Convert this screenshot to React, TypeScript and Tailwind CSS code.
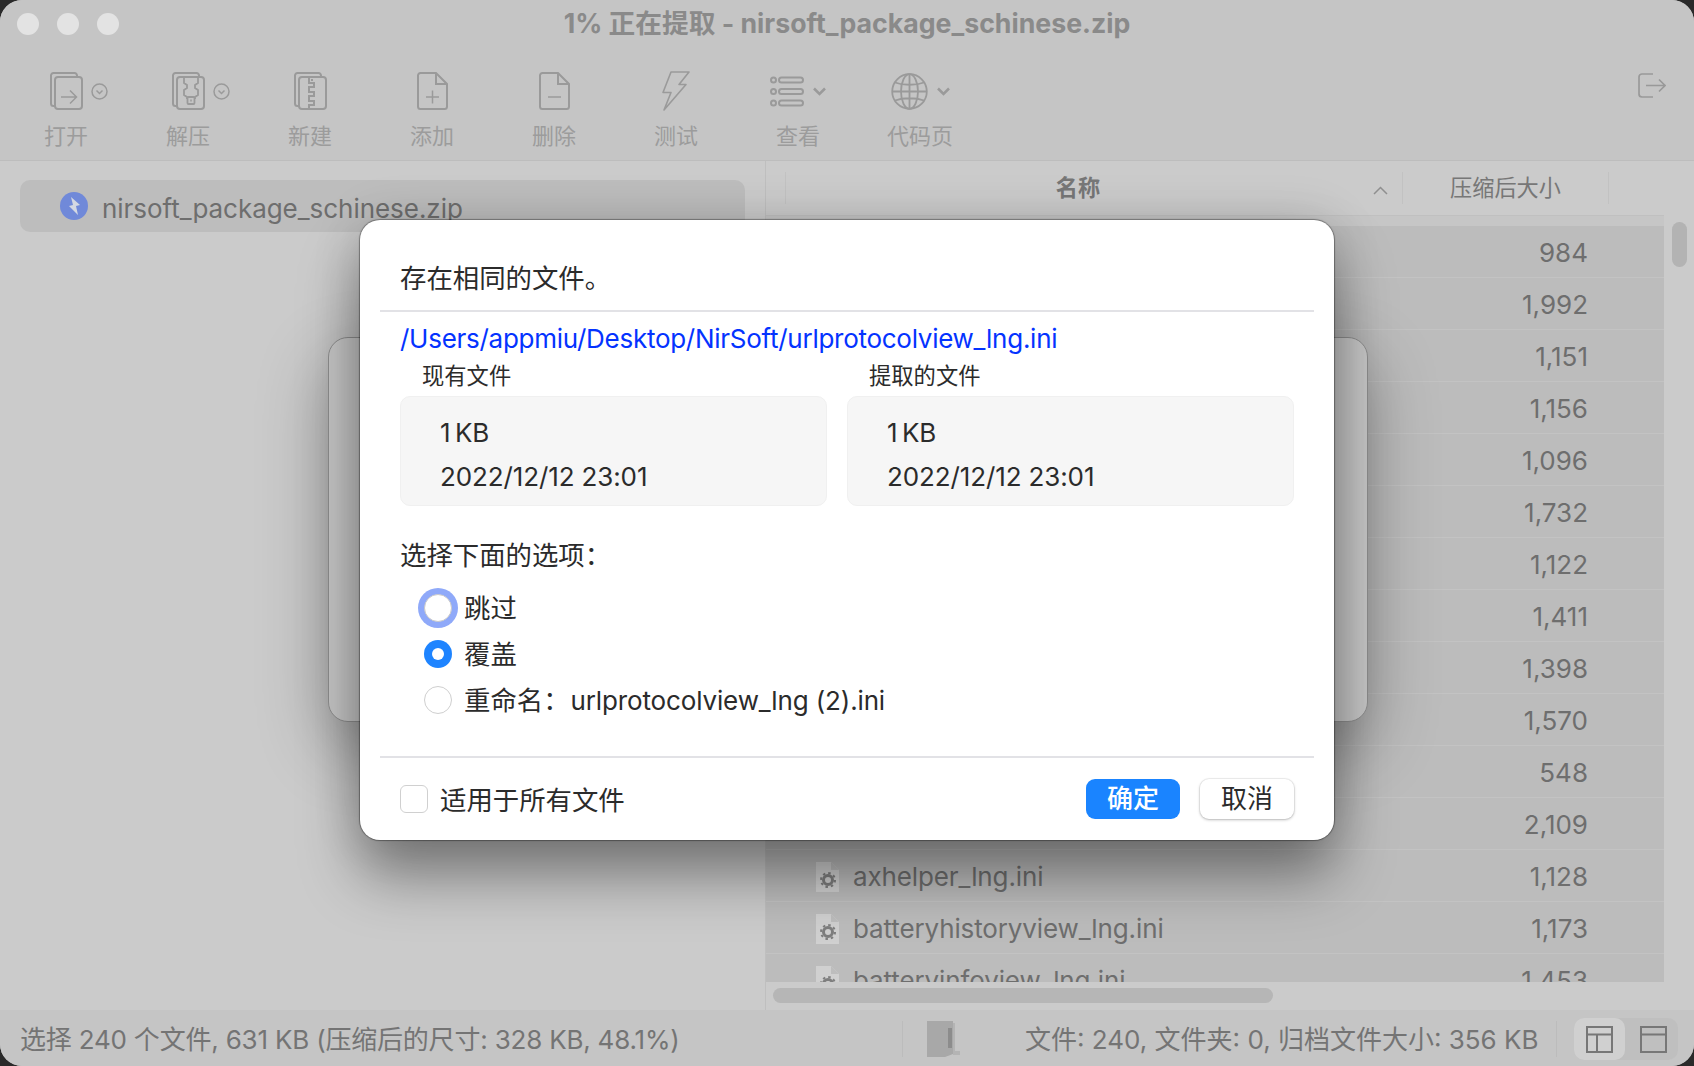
import React from "react";

const G = "#9a9a9a";

function Frames({ children }: { children?: React.ReactNode }) {
  return (
    <svg width="33" height="38" viewBox="0 0 33 38" fill="none" stroke={G} strokeWidth="2">
      <path d="M5 34H3.500a2.500 2.500 0 0 1-2.500-2.500V3.500A2.500 2.500 0 0 1 3.500 1h21A2.500 2.500 0 0 1 27 3.500V5" />
      <rect x="5" y="5" width="27" height="32" rx="3" />
      {children}
    </svg>
  );
}
const OpenIcon = () => (
  <Frames>
    <path d="M11 25h15M20 18.500l6.500 6.500-6.500 6.500" strokeWidth="1.500" />
  </Frames>
);
const ExtractIcon = () => (
  <Frames>
    <path d="M12 5v6l3 2v3l-3 2v5l3 2v2M26 5v6l-3 2v3l3 2v5l-3 2v2" strokeWidth="1.800" />
    <rect x="15.500" y="25" width="7" height="7" rx="1" strokeWidth="1.800" />
    <path d="M19 27.500v2" strokeWidth="1.500" />
  </Frames>
);
const NewZipIcon = () => (
  <Frames>
    <path d="M15 5v6h5v4h-5v5h5v4h-5v5h5v4h-5v4" strokeWidth="2" />
    <path d="M17 8h2" strokeWidth="2" />
  </Frames>
);
const DocIcon = ({ plus }: { plus?: boolean }) => (
  <svg width="31" height="38" viewBox="0 0 31 38" fill="none" stroke={G} strokeWidth="2">
    <path d="M3.500 1H19l11 11v22.500a2.500 2.500 0 0 1-2.500 2.500h-24A2.500 2.500 0 0 1 1 34.500v-31A2.500 2.500 0 0 1 3.500 1z" />
    <path d="M19 1v11h11" />
    <path d="M9 25h13" strokeWidth="1.500" />
    {plus && <path d="M15.500 18.500v13" strokeWidth="1.500" />}
  </svg>
);
const BoltIcon = () => (
  <svg width="28" height="40" viewBox="0 0 28 40" fill="none" stroke={G} strokeWidth="1.600" strokeLinejoin="round">
    <path d="M9 1h18L17 13.500h7L2 39l7-17.500H1z" />
  </svg>
);
const ListIcon = () => (
  <svg width="34" height="31" viewBox="0 0 34 31" fill="none" stroke={G} strokeWidth="2">
    <circle cx="3.500" cy="4" r="2.500" />
    <circle cx="3.500" cy="15.500" r="2.500" />
    <circle cx="3.500" cy="27" r="2.500" />
    <rect x="9" y="1.500" width="24" height="5" rx="2.500" />
    <rect x="9" y="13" width="24" height="5" rx="2.500" />
    <rect x="9" y="24.500" width="24" height="5" rx="2.500" />
  </svg>
);
const GlobeIcon = () => (
  <svg width="37" height="37" viewBox="0 0 37 37" fill="none" stroke={G} strokeWidth="1.800">
    <circle cx="18.500" cy="18.500" r="17.300" />
    <ellipse cx="18.500" cy="18.500" rx="8.500" ry="17.300" />
    <path d="M18.500 1v35M1.200 18.500h34.600M4 9.500c8 3 21 3 29 0M4 27.500c8-3 21-3 29 0" />
  </svg>
);
const CircleChevron = () => (
  <svg width="17" height="17" viewBox="0 0 17 17" fill="none" stroke={G} strokeWidth="1.500">
    <circle cx="8.500" cy="8.500" r="7.500" />
    <path d="M5.500 7.500l3 3 3-3" />
  </svg>
);
const Chevron = () => (
  <svg width="13" height="9" viewBox="0 0 13 9" fill="none" stroke={G} strokeWidth="2.500">
    <path d="M1 1.500l5.500 5.500L12 1.500" />
  </svg>
);
const ExitIcon = () => (
  <svg width="28" height="25" viewBox="0 0 28 25" fill="none" stroke="#999" strokeWidth="1.700">
    <path d="M15 1H4a3 3 0 0 0-3 3v17a3 3 0 0 0 3 3h11" />
    <path d="M8 12.500h19M21 6.500l6 6-6 6" />
  </svg>
);
const FileGear = () => (
  <svg width="24" height="32" viewBox="0 0 24 32" className="shrink-0">
    <path d="M0 1h15l8 8v22H0z" fill="#d0d0d0" />
    <path d="M15 1v8h8z" fill="#bdbdbd" />
    <circle cx="12" cy="19" r="4.500" fill="none" stroke="#7e7e7e" strokeWidth="3" />
    <circle cx="12" cy="19" r="7" fill="none" stroke="#7e7e7e" strokeWidth="2" strokeDasharray="2.500 3" />
  </svg>
);

function Tool({ label, icon, after, shift }: { label: string; icon: React.ReactNode; after?: React.ReactNode; shift?: boolean }) {
  return (
    <div className="flex w-[122px] shrink-0 flex-col items-center">
      <div className={shift ? "flex h-[40px] w-full items-center gap-[8px] pl-[45px]" : "flex h-[40px] items-center gap-[9px]"}>
        {icon}
        {after}
      </div>
      <div className="mt-[13px] text-[22px] leading-[24px] text-[#9c9c9c]">{label}</div>
    </div>
  );
}

const rows: { size: string; name?: string }[] = [
  { size: "984" }, { size: "1,992" }, { size: "1,151" }, { size: "1,156" }, { size: "1,096" },
  { size: "1,732" }, { size: "1,122" }, { size: "1,411" }, { size: "1,398" }, { size: "1,570" },
  { size: "548" }, { size: "2,109" },
  { size: "1,128", name: "axhelper_lng.ini" },
  { size: "1,173", name: "batteryhistoryview_lng.ini" },
  { size: "1,453", name: "batteryinfoview_lng.ini" },
];

function Radio({ state }: { state: "focus" | "on" | "off" }) {
  if (state === "on")
    return (
      <span className="flex h-[28px] w-[28px] items-center justify-center rounded-full bg-[#1e84ff]">
        <span className="h-[12px] w-[12px] rounded-full bg-white" />
      </span>
    );
  if (state === "focus")
    return <span className="h-[28px] w-[28px] rounded-full border border-[#c9c9c9] bg-white shadow-[0_0_0_6px_#8fa9f9]" />;
  return <span className="h-[28px] w-[28px] rounded-full border border-[#cfcfcf] bg-white" />;
}

function Option({ state, children }: { state: "focus" | "on" | "off"; children: React.ReactNode }) {
  return (
    <div className="flex h-[46px] items-center">
      <div className="flex w-[64px] justify-end pr-[12px]"><Radio state={state} /></div>
      <span className="pt-[2px] text-[26.400px]">{children}</span>
    </div>
  );
}

function InfoBox({ title, titlePad, cls }: { title: string; titlePad: string; cls: string }) {
  return (
    <div className={cls}>
      <div className={`text-[22.300px] leading-[26px] ${titlePad}`}>{title}</div>
      <div className="mt-[7px] flex h-[110px] flex-col rounded-[10px] border border-[#f0f0f0] bg-[#f6f6f6] pl-[39px] pt-[14px]">
        <div className="leading-[44px] [word-spacing:-3px]">1 KB</div>
        <div className="leading-[44px] tracking-[-0.12px]">2022/12/12 23:01</div>
      </div>
    </div>
  );
}

export default function App() {
  return (
    <div className="relative h-[1066px] w-[1694px] overflow-hidden bg-[#2a2a2a] font-[Inter,'Noto_Sans_CJK_SC',sans-serif] text-[26px] text-[#6e6e6e]">
      <div className="flex h-full flex-col overflow-hidden rounded-[22px] bg-[#cbcbcb]">
        {/* title + toolbar */}
        <div className="h-[161px] shrink-0 border-b border-[#bdbdbd] bg-[#c5c5c5]">
          <div className="grid h-[48px] grid-cols-[1fr_auto_1fr] items-center">
            <div className="flex gap-[18px] pl-[17px]">
              <span className="h-[22px] w-[22px] rounded-full bg-[#e3e3e3]" />
              <span className="h-[22px] w-[22px] rounded-full bg-[#e3e3e3]" />
              <span className="h-[22px] w-[22px] rounded-full bg-[#e3e3e3]" />
            </div>
            <div className="mb-[2px] text-[26.700px] font-bold text-[#8a8a8a]">1% 正在提取 - nirsoft_package_schinese.zip</div>
            <div />
          </div>
          <div className="flex items-start pl-[5px] pr-[28px] pt-[23px]">
            <Tool label="打开" icon={<OpenIcon />} after={<CircleChevron />} shift />
            <Tool label="解压" icon={<ExtractIcon />} after={<CircleChevron />} shift />
            <Tool label="新建" icon={<NewZipIcon />} />
            <Tool label="添加" icon={<DocIcon plus />} />
            <Tool label="删除" icon={<DocIcon />} />
            <Tool label="测试" icon={<BoltIcon />} />
            <Tool label="查看" icon={<ListIcon />} after={<Chevron />} />
            <Tool label="代码页" icon={<GlobeIcon />} after={<Chevron />} />
            <div className="ml-auto mt-[2px]"><ExitIcon /></div>
          </div>
        </div>

        {/* body */}
        <div className="flex h-[849px] shrink-0">
          <div className="w-[766px] shrink-0 border-r border-[#bfbfbf] px-[20px] pt-[19px]">
            <div className="flex h-[52px] w-[725px] items-center rounded-[10px] bg-[#bdbdbd] pl-[40px]">
              <svg width="28" height="28" viewBox="0 0 28 28" className="shrink-0">
                <circle cx="14" cy="14" r="14" fill="#7089d9" />
                <path d="M11 5l9 8-4 1 2 9-9-9 4-1z" fill="#d4d8e2" />
              </svg>
              <span className="ml-[14px] pt-[4px] tracking-[-0.04px] text-[#6e6e6e]">nirsoft_package_schinese.zip</span>
            </div>
          </div>
          <div className="flex min-w-0 flex-1 flex-col">
            <div className="flex h-[54px] shrink-0 items-center text-[22.200px] text-[#777]">
              <div className="ml-[19px] h-[32px] w-px bg-[#c2c2c2]" />
              <div className="relative flex h-full w-[616px] items-center justify-center pr-[32px] font-semibold">
                名称
                <svg width="15" height="9" viewBox="0 0 15 9" fill="none" stroke="#8f8f8f" strokeWidth="1.500" className="absolute right-[14px] top-[25px]">
                  <path d="M1 8l6.500-6.500L14 8" />
                </svg>
              </div>
              <div className="h-[32px] w-px bg-[#c2c2c2]" />
              <div className="flex w-[205px] justify-center">压缩后大小</div>
              <div className="h-[32px] w-px bg-[#c2c2c2]" />
            </div>
            <div className="flex min-h-0 flex-1">
              <div className="flex h-[767px] w-[898px] flex-col overflow-hidden">
                <div className="h-[11px] shrink-0 border-t border-[#c0c0c0] bg-[#c6c6c6]" />
                {rows.map((r) => (
                  <div key={r.size} className="flex h-[52px] shrink-0 items-center border-b border-[#c3c3c3] bg-[#bcbcbc] pl-[50px] pr-[76px] pt-[2px]">
                    {r.name && <FileGear />}
                    {r.name && <span className="ml-[13px] tracking-[-0.12px]">{r.name}</span>}
                    <span className="ml-auto">{r.size}</span>
                  </div>
                ))}
              </div>
              <div className="flex-1 pl-[8px] pt-[7px]">
                <div className="h-[45px] w-[15px] rounded-full bg-[#b3b3b3]" />
              </div>
            </div>
            <div className="h-[28px] shrink-0 pl-[7px] pt-[6px]">
              <div className="h-[15px] w-[500px] rounded-full bg-[#b6b6b6]" />
            </div>
          </div>
        </div>

        {/* status */}
        <div className="flex h-[56px] shrink-0 items-center bg-[#c5c5c5] pt-[2px] text-[26px] text-[#747474]">
          <span className="ml-[20px] w-[882px] shrink-0 tracking-[-0.2px]">选择 240 个文件, 631 KB (压缩后的尺寸: 328 KB, 48.1%)</span>
          <div className="h-[36px] w-px bg-[#bcbcbc]" />
          <svg width="35" height="38" viewBox="0 0 35 38" className="ml-[23px] shrink-0">
            <path d="M1 1h26v33l-8 3H1z" fill="#a8a8a8" />
            <path d="M22 3h7v28h5v4H27V3z" fill="#b4b4b4" />
            <rect x="22" y="8" width="4" height="20" fill="#8c8c8c" />
          </svg>
          <span className="ml-[64px] w-[531px] shrink-0">文件: 240, 文件夹: 0, 归档文件大小: 356 KB</span>
          <div className="h-[36px] w-px bg-[#bcbcbc]" />
          <div className="ml-[17px] flex h-[42px] w-[104px] rounded-[10px] bg-[#bfbfbf]">
            <div className="flex w-[51px] items-center justify-center rounded-[10px] bg-[#d0d0d0]">
              <svg width="27" height="27" viewBox="0 0 27 27" fill="none" stroke="#777" strokeWidth="2">
                <rect x="1" y="1" width="25" height="25" />
                <path d="M1 8.500h25M11 8.500V26" />
              </svg>
            </div>
            <div className="flex flex-1 items-center justify-center pl-[4px]">
              <svg width="27" height="27" viewBox="0 0 27 27" fill="none" stroke="#777" strokeWidth="2">
                <rect x="1" y="1" width="25" height="25" />
                <path d="M1 8.500h25" />
              </svg>
            </div>
          </div>
        </div>
      </div>

      {/* sheet behind */}
      <div className="absolute left-[328px] top-[337px] h-[385px] w-[1040px] rounded-[20px] border border-[#8e8e8e] bg-[#c8c8c8] shadow-[0_24px_70px_rgba(0,0,0,0.3)]" />

      {/* sheet */}
      <div className="absolute left-[360px] top-[220px] flex h-[620px] w-[974px] flex-col rounded-[20px] bg-white text-[#2b2b2b] shadow-[0_0_1px_1px_rgba(0,0,0,0.35),0_36px_60px_0_rgba(0,0,0,0.4),0_0_50px_rgba(0,0,0,0.14)]">
        <div className="mx-[20px] h-[92px] shrink-0 border-b-2 border-[#e2e2e6] pl-[20px] pt-[37px] text-[26.400px] leading-[42px]">存在相同的文件。</div>
        <div className="px-[40px]">
          <div className="mb-[4px] mt-[7px] leading-[40px] tracking-[-0.27px] text-[#0433ff]">/Users/appmiu/Desktop/NirSoft/urlprotocolview_lng.ini</div>
          <div className="flex gap-[20px]">
            <InfoBox title="现有文件" titlePad="pl-[22px]" cls="w-[427px] shrink-0" />
            <InfoBox title="提取的文件" titlePad="pl-[22px]" cls="w-[447px] shrink-0" />
          </div>
          <div className="mt-[29px] text-[26.400px] leading-[40px]">选择下面的选项：</div>
          <div className="mt-[10px] flex flex-col">
            <Option state="focus">跳过</Option>
            <Option state="on">覆盖</Option>
            <Option state="off">
              重命名：<span className="ml-[1px] text-[26px] tracking-[-0.14px]">urlprotocolview_lng (2).ini</span>
            </Option>
          </div>
        </div>
        <div className="mx-[20px] mt-[33px] h-[2px] shrink-0 bg-[#e2e2e6]" />
        <div className="flex flex-1 items-center px-[40px]">
          <span className="h-[28px] w-[28px] rounded-[6px] border border-[#d0d0d0] bg-white" />
          <span className="ml-[12px] pt-[3px] text-[26.400px]">适用于所有文件</span>
          <button className="ml-auto flex h-[40px] w-[94px] items-center justify-center rounded-[9px] bg-[#1a84ff] pb-[2px] font-medium text-white">确定</button>
          <button className="ml-[20px] flex h-[40px] w-[94px] items-center justify-center rounded-[9px] bg-white pb-[2px] shadow-[0_1px_3px_rgba(0,0,0,0.25),0_0_0_1px_rgba(0,0,0,0.05)]">取消</button>
        </div>
      </div>
    </div>
  );
}
